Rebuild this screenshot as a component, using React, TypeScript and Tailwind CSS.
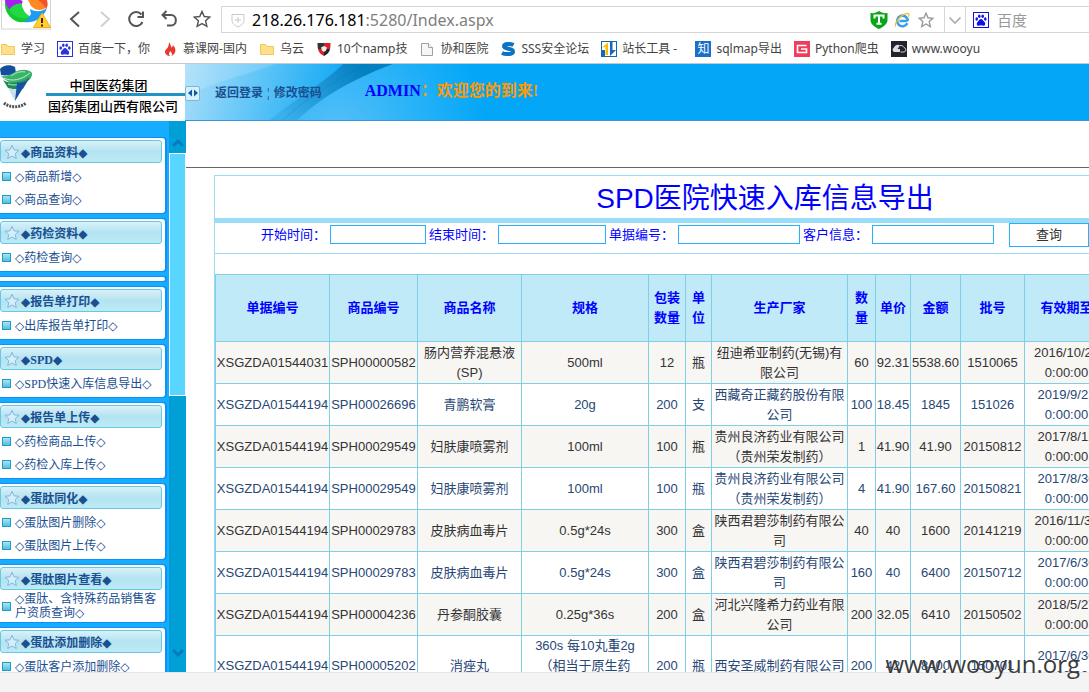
import type { ReactNode } from "react";

const UI = "font-['Noto_Sans','Noto_Sans_CJK_SC',sans-serif]";
const ARIAL = "font-['Liberation_Sans','Noto_Sans_CJK_SC',sans-serif]";
const SERIF = "font-['Liberation_Serif','Noto_Sans_CJK_SC',serif]";

function Folder() {
  return (
    <svg viewBox="0 0 16 16" className="size-4 shrink-0">
      <path d="M1.5 3.5h5l1.5 2h6.500v8h-13z" fill="#ffe08a" stroke="#efc75a" />
    </svg>
  );
}

function Paw({ color = "#2932e1" }: { color?: string }) {
  return (
    <svg viewBox="0 0 16 16" className="size-4 shrink-0">
      <rect x="0.5" y="0.5" width="15" height="15" fill="#fff" stroke={color} />
      <g fill={color}>
        <ellipse cx="3.700" cy="7" rx="1.300" ry="1.700" />
        <ellipse cx="6.300" cy="4.300" rx="1.300" ry="1.800" />
        <ellipse cx="9.700" cy="4.300" rx="1.300" ry="1.800" />
        <ellipse cx="12.300" cy="7" rx="1.300" ry="1.700" />
        <path d="M8 7c-1.500 0-2 1.600-3.200 2.700-1.600 1.400-1.300 4 .6 4 1 0 1.600-.4 2.600-.4s1.600.4 2.600.4c1.900 0 2.200-2.600.6-4C10 8.600 9.500 7 8 7z" />
      </g>
    </svg>
  );
}

function Flame() {
  return (
    <svg viewBox="0 0 16 16" className="size-4 shrink-0">
      <path d="M7 1c2 2.500 1.500 4 2.500 5.500C10.500 6 11 5 10.800 4c2 2 3.200 4.500 2.400 7-.6 2.300-2.600 4-5 4s-5-1.500-5.200-4C2.800 8.500 5 8.200 6 6c.8-1.700 1-3.300 1-5z" fill="#e8392f" />
      <path d="M8.500 15c-2-.5-2-3 0-5 .3 1.500 1.800 2 1.600 3.500-.1 1-.8 1.500-1.600 1.500z" fill="#fff" />
    </svg>
  );
}

function CheckerShield() {
  return (
    <svg viewBox="0 0 16 16" className="size-4 shrink-0">
      <path d="M1.500 2h6.500v6H2C1.500 6 1.500 4 1.500 2z" fill="#333" />
      <path d="M8 2h6.500c0 2 0 4-.5 6H8z" fill="#d8202a" />
      <path d="M2 8h6v7C5 13.500 2.500 11.500 2 8z" fill="#d8202a" />
      <path d="M14 8H8v7c3-1.500 5.500-3.500 6-7z" fill="#222" />
      <path d="M5 6.500l3-1.500 3 1.500-1 3-2 1.500-2-1.500z" fill="#eee" />
    </svg>
  );
}

function PageIcon() {
  return (
    <svg viewBox="0 0 16 16" className="size-4 shrink-0">
      <path d="M2.500 2.500h7l4 4v8h-11z" fill="#f6f6f6" stroke="#a0a0a0" />
      <path d="M9.500 2.500v4h4" fill="#fff" stroke="#a0a0a0" />
    </svg>
  );
}

function SwirlS() {
  return (
    <svg viewBox="0 0 16 16" className="size-4 shrink-0" fill="none" stroke="#0b72c4" strokeWidth="4">
      <path d="M13.500 4C11 2.600 4 2.200 4 5.200c0 3.200 9 1.800 9 5.200 0 3.600-8.300 3-11 1.600" />
    </svg>
  );
}

function StationTool() {
  return (
    <svg viewBox="0 0 16 16" className="size-4 shrink-0">
      <rect x="0.500" y="0.500" width="15" height="15" fill="#fff" stroke="#1565b5" />
      <path d="M1 6.500 7 1.500V14H4.500V6z" fill="#f9bd00" />
      <path d="M1 9h3v6H1zM9 1h2.500v8H15L9 15z" fill="#1768b8" />
    </svg>
  );
}

function ZhiIcon() {
  return (
    <span className="flex size-4 shrink-0 items-center justify-center bg-[#1a6fc9] text-xs leading-4 text-white">知</span>
  );
}

function GIcon() {
  return (
    <svg viewBox="0 0 16 16" className="size-4 shrink-0">
      <rect width="16" height="16" fill="#ee3e5c" />
      <path d="M12.500 4.500h-9v7h9V8H7" fill="none" stroke="#fff" strokeWidth="1.600" />
    </svg>
  );
}

function CloudIcon() {
  return (
    <svg viewBox="0 0 16 16" className="size-4 shrink-0">
      <rect width="16" height="16" fill="#23232d" />
      <path d="M3 11a2.500 2.500 0 0 1 0-4.500A4 4 0 0 1 9 4.500L6.500 8H9v3z" fill="#ddd" />
      <path d="M9 4.500a3.500 3.500 0 0 1 4 2 2.300 2.300 0 0 1 0 4.500H9.500" fill="none" stroke="#ccc" />
    </svg>
  );
}

const bookmarks: { icon: ReactNode; label: string }[] = [
  { icon: <Folder />, label: "学习" },
  { icon: <Paw />, label: "百度一下，你" },
  { icon: <Flame />, label: "慕课网-国内" },
  { icon: <Folder />, label: "乌云" },
  { icon: <CheckerShield />, label: "10个namp技" },
  { icon: <PageIcon />, label: "协和医院" },
  { icon: <SwirlS />, label: "SSS安全论坛" },
  { icon: <StationTool />, label: "站长工具 -  " },
  { icon: <ZhiIcon />, label: "sqlmap导出" },
  { icon: <GIcon />, label: "Python爬虫" },
  { icon: <CloudIcon />, label: "www.wooyu" },
];

const starPath = "M8 1.300l2 4.500 4.900.5-3.700 3.300 1.100 4.900L8 12l-4.300 2.500 1.100-4.900L1.100 6.300 6 5.800z";

function BrowserLogo() {
  return (
    <svg viewBox="0 0 50 30" className="h-[30px] w-[50px]">
      <rect x="0.500" y="-2" width="49" height="31" fill="#fff" stroke="#d4d4d4" />
      <path d="M4 0h13c3 0 6 0 4 4-5-1-10 2-13 8C5 9 4 4 4 0z" fill="#a81ef0" />
      <path d="M7 12c4-8 10-9 14-8 1 6 3 10 9 13-7 9-19 6-23-5z" fill="#22d843" />
      <path d="M4 2c-1 12 8 20 18 20 4 0 7-3 8-5-9 3-19 0-22-8z" fill="#14c832" />
      <path d="M22 22c3-1 6-4 8-8l-1-5c7 4 13 2 17-1-3 9-12 16-24 14z" fill="#1c9cf4" />
      <path d="M27 0h11c5 3 8 7 5 9-8 3-14-2-16-9z" fill="#ff8a24" />
      <path d="M37 0h9c1 4 1 6-1 9-2-4-4-6-8-9z" fill="#f9502c" />
      <circle cx="25" cy="5" r="4" fill="#fff" />
      <path d="M41 13l8.500 14.500h-17z" fill="#ffd02e" stroke="#f0b010" />
      <path d="M41 18v5M41 24.500v2" stroke="#5a1a10" strokeWidth="2" />
    </svg>
  );
}

function Toolbar() {
  return (
    <div className="flex h-[34px] shrink-0 items-start bg-white">
      <div className="w-[60px] shrink-0 pl-px">
        <BrowserLogo />
      </div>
      <div className="flex w-[161px] shrink-0 items-center pt-[9px]">
        <button aria-label="后退" className="flex w-[30px] justify-center">
          <svg viewBox="0 0 20 20" className="size-5" fill="none" stroke="#555" strokeWidth="2">
            <path d="M14 3l-8 7 8 7.500" />
          </svg>
        </button>
        <button aria-label="前进" className="flex w-[30px] justify-center">
          <svg viewBox="0 0 20 20" className="size-5" fill="none" stroke="#d0d0d0" strokeWidth="2">
            <path d="M6 3l8 7-8 7.500" />
          </svg>
        </button>
        <button aria-label="刷新" className="flex w-8 justify-center">
          <svg viewBox="0 0 20 20" className="size-5" fill="none" stroke="#555" strokeWidth="2">
            <path d="M16.500 13A7 7 0 1 1 15.500 5.500" />
            <path d="M17 2.500V8h-5.500" />
          </svg>
        </button>
        <button aria-label="恢复" className="flex w-[34px] justify-center">
          <svg viewBox="0 0 20 20" className="size-5" fill="none" stroke="#555" strokeWidth="2">
            <path d="M7.500 2L3.500 6l4 4" />
            <path d="M3.500 6H12c6.500 0 6.500 10.500 0 10.500H8" />
          </svg>
        </button>
        <button aria-label="收藏" className="flex w-8 justify-center">
          <svg viewBox="0 0 16 16" className="size-[18px]" fill="none" stroke="#555" strokeWidth="1.300">
            <path d={starPath} />
          </svg>
        </button>
      </div>
      <div className="mt-[6px] flex h-[27px] min-w-0 flex-1 items-center border border-r-0 border-[#d6d6d6] pl-2">
        <svg viewBox="0 0 16 16" className="size-4 shrink-0" fill="none" stroke="#c9c9c9">
          <path d="M2 2.500h12V8c0 3.500-3 5.500-6 7-3-1.500-6-3.500-6-7z" />
          <path d="M8 5v6M5 8h6" />
        </svg>
        <div className="ml-[6px] min-w-0 flex-1 truncate text-base leading-6 text-[#808080]">
          <span className="text-black">218.26.176.181</span>:5280/Index.aspx
        </div>
        <div className="flex shrink-0 items-center gap-[6px] pr-[10px]">
          <svg viewBox="0 0 18 18" className="size-[18px]">
            <path d="M0.500 2C4 2.500 7 1.500 9 0c2 1.500 5 2.500 8.500 2v7c0 4-4 7-8.500 9C4.500 16 .5 13 .5 9z" fill="#08a516" />
            <path d="M4.500 7.500V4.500h9v3M9 4.500v8M6.500 12.800h5" fill="none" stroke="#fff" strokeWidth="2" />
          </svg>
          <svg viewBox="0 0 16 16" className="size-4" fill="none">
            <path d="M13.500 9H5.500M13.300 11.200A5.300 5.300 0 1 1 13.800 9" stroke="#3a9fe6" strokeWidth="2.600" />
            <path d="M2 14.500C-1 12 7 1.500 14 1.300c1.600.3.800 2.700.3 3.500" stroke="#f4bd27" strokeWidth="1.200" />
          </svg>
          <svg viewBox="0 0 16 16" className="ml-[2px] size-4" fill="none" stroke="#999" strokeWidth="1.400">
            <path d={starPath} />
          </svg>
        </div>
        <button aria-label="展开" className="flex h-full w-[22px] shrink-0 items-center justify-center border-x border-[#d6d6d6]">
          <svg viewBox="0 0 14 14" className="size-[14px]" fill="none" stroke="#aaa" strokeWidth="1.600">
            <path d="M1.500 4.500L7 10l5.500-5.500" />
          </svg>
        </button>
        <div className="flex w-[123px] shrink-0 items-center gap-2 pl-[7px]">
          <Paw color="#1010e8" />
          <input
            aria-label="搜索"
            placeholder="百度"
            className="w-20 min-w-0 bg-transparent text-[15px] leading-6 outline-none placeholder:text-[#999]"
          />
        </div>
      </div>
    </div>
  );
}

function BookmarkBar() {
  return (
    <nav className="flex h-[30px] shrink-0 items-center gap-3 overflow-hidden border-b border-[#c8c8c8] bg-white text-xs text-[#444]">
      {bookmarks.map((b) => (
        <a key={b.label} href="#" className="flex shrink-0 items-center gap-[5px] whitespace-pre">
          {b.icon}
          {b.label}
        </a>
      ))}
    </nav>
  );
}

function CompanyLogo() {
  return (
    <svg viewBox="0 0 34 46" className="h-[46px] w-[34px] shrink-0">
      <path d="M0 5c3-4 10-5 15-2l1 6C12 11 5 12 1 11z" fill="#144f9c" />
      <path d="M1 12c5 1 9-1 14-4 6-3 14-3 17 1 1 4-4 9-8 10-7 3-15 1-23-7z" fill="#38b46a" />
      <path d="M3 16c7 4 16 4 27-3l-7 12c-6 1-12 0-15-1z" fill="#208b58" />
      <path d="M4 14c8 4 17 2 26-5M8 20c7 2 12 1 19-4M11 12c4-3 9-5 14-4" stroke="#bfe9d0" fill="none" />
      <path d="M8 24c5 2 10 1 15-1l-8 14z" fill="#c9e0ee" />
      <path d="M17 19c5 0 9-2 12-5l-14 23z" fill="#1552a4" />
      <path d="M4 39c6 5 16 5 22 0" fill="none" stroke="#4a5560" strokeWidth="3" strokeDasharray="2 1" />
    </svg>
  );
}

function PageHeader() {
  return (
    <header className="flex h-[57px] shrink-0">
      <div className={`${UI} flex w-[185px] shrink-0 bg-white text-[13px] font-medium text-black`}>
        <CompanyLogo />
        <div className="ml-3 flex flex-1 flex-col pt-[14px]">
          <div className="border-b-[3px] border-[#2392c4] pr-[14px] text-center leading-[15px]">中国医药集团</div>
          <div className="whitespace-nowrap pl-[2px] pt-px leading-[18px]">国药集团山西有限公司</div>
        </div>
      </div>
      <div className="relative min-w-0 flex-1 overflow-hidden border-b border-[#3d94dc] bg-[#04a7f8]">
        <svg viewBox="0 0 340 56" preserveAspectRatio="none" className="absolute left-0 top-0 h-full w-[340px]">
          <defs>
            <linearGradient id="sheen" gradientUnits="userSpaceOnUse" x1="0" y1="0" x2="150" y2="40">
              <stop offset="0" stopColor="#a9def9" />
              <stop offset="0.350" stopColor="#74ccf8" />
              <stop offset="1" stopColor="#14a9f4" />
            </linearGradient>
            <linearGradient id="fold" gradientUnits="userSpaceOnUse" x1="100" y1="56" x2="175" y2="0">
              <stop offset="0" stopColor="#3ab0ec" />
              <stop offset="1" stopColor="#047fc0" />
            </linearGradient>
            <radialGradient id="tail" gradientUnits="userSpaceOnUse" cx="150" cy="70" r="150">
              <stop offset="0" stopColor="#56c0f8" />
              <stop offset="1" stopColor="#04a7f8" />
            </radialGradient>
          </defs>
          <rect width="340" height="56" fill="url(#tail)" />
          <path d="M0 0h158C140 18 112 34 85 56H0z" fill="url(#sheen)" />
          <path d="M0 0h90C60 12 30 16 0 34z" fill="#fff" opacity="0.150" />
          <path d="M158 0h50C165 16 136 34 112 56H85C112 34 140 18 158 0z" fill="url(#fold)" />
          <path d="M182 0C150 16 122 34 98 56" stroke="#036fae" strokeWidth="1" opacity="0.250" fill="none" />
        </svg>
        <div className="relative flex h-full items-center pt-[2px]">
          <button aria-label="折叠菜单" className="flex size-[15px] items-center justify-center rounded-[2px] border border-[#7ab6e0] bg-[#d8effc]">
            <svg viewBox="0 0 12 12" className="size-3" fill="#0a5cb0">
              <path d="M5 2.500v7L1 6zM7 2.500v7L11 6z" />
            </svg>
          </button>
          <div className={`${SERIF} ml-[15px] flex text-xs font-bold text-[#1b4f91]`}>
            <a href="#">返回登录</a>
            <span className="px-1 text-[#456]">¦</span>
            <a href="#">修改密码</a>
          </div>
          <p className={`${SERIF} ml-[43px] whitespace-nowrap pb-1 text-base leading-5 font-bold text-[#ff9900]`}>
            <span className="text-[#0000ff]">ADMIN</span>：欢迎您的到来!
          </p>
        </div>
      </div>
    </header>
  );
}

const menu: { title: string; items: string[] }[] = [
  { title: "商品资料", items: ["商品新增", "商品查询"] },
  { title: "药检资料", items: ["药检查询"] },
  { title: "", items: [] },
  { title: "报告单打印", items: ["出库报告单打印"] },
  { title: "SPD", items: ["SPD快速入库信息导出"] },
  { title: "报告单上传", items: ["药检商品上传", "药检入库上传"] },
  { title: "蛋肽同化", items: ["蛋肽图片删除", "蛋肽图片上传"] },
  { title: "蛋肽图片查看", items: ["蛋肽、含特殊药品销售客户资质查询"] },
  { title: "蛋肽添加删除", items: ["蛋肽客户添加删除"] },
];

function Mark({ glyph }: { glyph: string }) {
  return <span className="font-['DejaVu_Sans',sans-serif] font-normal">{glyph}</span>;
}

function MenuCard({ title, items }: { title: string; items: string[] }) {
  if (!title) {
    return <div className="h-[4px] shrink-0 rounded-r-[3px] bg-white shadow-[1px_0_0_1px_#0c90fa]" />;
  }
  return (
    <section className="shrink-0 rounded-r-[3px] bg-white pb-[2px] pt-[2px] shadow-[1px_0_0_1px_#0c90fa]">
      <h2 className="mr-[3px] flex h-[23px] items-center rounded-[3px] border border-[#68c8e4] bg-linear-to-b from-[#d9f1f8] from-0% via-[#b4e3f1] via-50% to-[#bcebf6] text-xs font-bold text-[#1b4f91]">
        <svg viewBox="0 0 16 16" className="ml-[3px] size-4 shrink-0" fill="#d4effc" stroke="#86b4dc">
          <path d={starPath} />
        </svg>
        <span className="ml-[1px] pt-[3px] leading-[18px]">
          <Mark glyph="◆" />
          {title}
          <Mark glyph="◆" />
        </span>
      </h2>
      <ul className="pt-[2px] text-xs text-[#1b4f91]">
        {items.map((item) => (
          <li key={item} className="flex min-h-[23px] items-center pl-[2px]">
            <span className="size-[9px] shrink-0 border border-[#18a0c8] bg-linear-to-b from-[#a8e4f4] to-[#58bce0]" />
            <a href="#" className="ml-1 mr-1 leading-[14px]">
              <Mark glyph="◇" />
              {item}
              <Mark glyph="◇" />
            </a>
          </li>
        ))}
      </ul>
    </section>
  );
}

function Sidebar() {
  return (
    <aside className="flex w-[186px] shrink-0 overflow-hidden bg-[#16acff]">
      <div className={`${SERIF} flex min-w-0 flex-1 flex-col gap-[6px] pr-1 pt-[17px]`}>
        {menu.map((m, i) => (
          <MenuCard key={i} {...m} />
        ))}
      </div>
      <div className="flex w-[17px] shrink-0 flex-col bg-[#009fd6]">
        <div className="flex h-8 items-center justify-center pt-3">
          <svg viewBox="0 0 12 10" className="h-[10px] w-3" fill="none" stroke="#0878c4" strokeWidth="3">
            <path d="M1 8l5-5 5 5" />
          </svg>
        </div>
        <div className="h-[243px] border border-white bg-[#58d6ff]" />
        <div className="flex flex-1 items-end justify-center pb-[14px]">
          <svg viewBox="0 0 12 10" className="h-[10px] w-3" fill="none" stroke="#0878c4" strokeWidth="3">
            <path d="M1 2l5 5 5-5" />
          </svg>
        </div>
      </div>
    </aside>
  );
}

const columns: { label: string; width: string }[] = [
  { label: "单据编号", width: "w-[114px]" },
  { label: "商品编号", width: "w-[88px]" },
  { label: "商品名称", width: "w-[104px]" },
  { label: "规格", width: "w-[127px]" },
  { label: "包装数量", width: "w-[37px]" },
  { label: "单位", width: "w-[26px]" },
  { label: "生产厂家", width: "w-[136px]" },
  { label: "数量", width: "w-[28px]" },
  { label: "单价", width: "w-[35px]" },
  { label: "金额", width: "w-[50px]" },
  { label: "批号", width: "w-[64px]" },
  { label: "有效期至", width: "w-[84px]" },
];

const rows: string[][] = [
  ["XSGZDA01544031", "SPH00000582", "肠内营养混悬液(SP)", "500ml", "12", "瓶", "纽迪希亚制药(无锡)有限公司", "60", "92.31", "5538.60", "1510065", "2016/10/21 0:00:00"],
  ["XSGZDA01544194", "SPH00026696", "青鹏软膏", "20g", "200", "支", "西藏奇正藏药股份有限公司", "100", "18.45", "1845", "151026", "2019/9/22 0:00:00"],
  ["XSGZDA01544194", "SPH00029549", "妇肤康喷雾剂", "100ml", "100", "瓶", "贵州良济药业有限公司（贵州荣发制药）", "1", "41.90", "41.90", "20150812", "2017/8/12 0:00:00"],
  ["XSGZDA01544194", "SPH00029549", "妇肤康喷雾剂", "100ml", "100", "瓶", "贵州良济药业有限公司（贵州荣发制药）", "4", "41.90", "167.60", "20150821", "2017/8/30 0:00:00"],
  ["XSGZDA01544194", "SPH00029783", "皮肤病血毒片", "0.5g*24s", "300", "盒", "陕西君碧莎制药有限公司", "40", "40", "1600", "20141219", "2016/11/30 0:00:00"],
  ["XSGZDA01544194", "SPH00029783", "皮肤病血毒片", "0.5g*24s", "300", "盒", "陕西君碧莎制药有限公司", "160", "40", "6400", "20150712", "2017/6/30 0:00:00"],
  ["XSGZDA01544194", "SPH00004236", "丹参酮胶囊", "0.25g*36s", "200", "盒", "河北兴隆希力药业有限公司", "200", "32.05", "6410", "20150502", "2018/5/27 0:00:00"],
  ["XSGZDA01544194", "SPH00005202", "消痤丸", "360s 每10丸重2g （相当于原生药3g）", "200", "瓶", "西安圣威制药有限公司", "200", "42", "8400", "150701", "2017/6/30 0:00:00"],
];

const filters: { id: string; label: string; width: string }[] = [
  { id: "start", label: "开始时间：", width: "w-24" },
  { id: "end", label: "结束时间：", width: "w-[108px]" },
  { id: "bill", label: "单据编号：", width: "w-[122px]" },
  { id: "client", label: "客户信息：", width: "w-[122px]" },
];

function DataTable() {
  return (
    <table className="w-[894px] table-fixed border-collapse text-center text-[13px] leading-5">
      <thead>
        <tr className="h-[67px] bg-[#c0eaf7] text-[#0000ff]">
          {columns.map((c) => (
            <th key={c.label} className={`${c.width} border border-[#7fd0e4] px-[2px] py-0 font-bold`}>
              {c.label}
            </th>
          ))}
        </tr>
      </thead>
      <tbody>
        {rows.map((row, r) => (
          <tr key={r} className="h-[42px] text-[#333] odd:bg-[#f7f6f3] even:bg-white even:text-[#284775]">
            {row.map((cell, c) => (
              <td key={c} className={c === 3 || c === 11 ? "border border-[#7fd0e4] px-2 py-0" : "border border-[#7fd0e4] p-0"}>
                {cell}
              </td>
            ))}
          </tr>
        ))}
      </tbody>
    </table>
  );
}

function Content() {
  return (
    <main className={`${ARIAL} min-w-0 flex-1 overflow-hidden bg-white`}>
      <div className="h-[47px] border-b border-[#666]" />
      <div className="ml-7 mt-[7px] w-[1102px] border border-[#9adcf8]">
        <h1 className="border-b-[5px] border-[#9adcf8] pt-1 text-center text-[28px] leading-[38px] text-[#0000ff]">
          SPD医院快速入库信息导出
        </h1>
        <form
          className="flex h-[31px] items-start gap-[3px] border-b border-[#9adcf8] pl-[46px] text-[13px]"
          onSubmit={(e) => e.preventDefault()}
        >
          {filters.map((f) => (
            <div key={f.id} className="flex items-center gap-1 pt-px">
              <label htmlFor={f.id} className="whitespace-nowrap pt-px leading-5 text-[#0000ff]">
                {f.label}
              </label>
              <input id={f.id} className={`${f.width} h-[19px] border border-[#28b0f8] bg-white px-1 outline-none`} />
            </div>
          ))}
          <button type="submit" className="ml-3 h-6 w-20 border border-[#28b0f8] bg-white text-[#333]">
            查询
          </button>
        </form>
        <div className="pt-5">
          <DataTable />
        </div>
      </div>
    </main>
  );
}

export default function App() {
  return (
    <div className={`${UI} relative flex h-screen flex-col overflow-hidden bg-white`}>
      <Toolbar />
      <BookmarkBar />
      <PageHeader />
      <div className="flex min-h-0 flex-1">
        <Sidebar />
        <Content />
      </div>
      <footer className="h-5 shrink-0 border-t border-[#e6e6e6] bg-[#f4f4f4]" />
      <div className="absolute bottom-3 right-[9px] font-['Open_Sans',sans-serif] text-2xl leading-8 text-[#3c3c3c]">
        www.wooyun.org
      </div>
    </div>
  );
}
